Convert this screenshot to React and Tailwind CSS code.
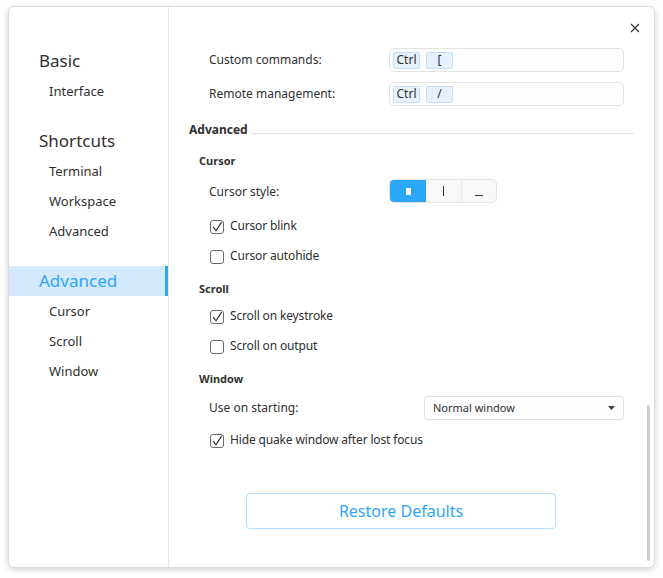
import React from "react";

const font = { fontFamily: '"Noto Sans", "Open Sans", sans-serif' };

function Check({ checked, label }) {
  return (
    <div className="flex items-center h-[30px] pl-[41px]">
      <div className="w-[14px] h-[14px] rounded-[3px] border border-[#6a6a6a] bg-white flex items-center justify-center mt-[1px]">
        {checked && (
          <svg width="12" height="12" viewBox="0 0 12 12">
            <path d="M2.2 6.2 L5 9.8 L10.6 1.2" fill="none" stroke="#303030" strokeWidth="1.2" />
          </svg>
        )}
      </div>
      <span className="ml-[6px] text-[12px] tracking-[-0.15px] text-[#303030]">{label}</span>
    </div>
  );
}

function Chip({ children }) {
  return (
    <div className="h-[17px] w-[27px] rounded-[2px] bg-[#e5f1fd] border border-[#c9def6] flex items-center justify-center text-[12px] text-[#303030] mr-[6px]">
      {children}
    </div>
  );
}

function ShortcutRow({ label, k, mt }) {
  return (
    <div className={`flex items-center h-[30px] ${mt}`}>
      <div className="w-[220px] pl-[40px] text-[12px] text-[#303030]">{label}</div>
      <div className="w-[235px] h-[24px] rounded-[5px] border border-[#e3e3e3] bg-[#fdfdfd] flex items-center pl-[3px]">
        <Chip>Ctrl</Chip>
        <Chip>{k}</Chip>
      </div>
    </div>
  );
}

function Side({ children, sub, selected, mt = "" }) {
  if (selected) {
    return (
      <div className={`h-[30px] flex items-center pl-[30px] bg-[#d4e9fb] border-r-[3px] border-[#2ca7f8] text-[17px] text-[#2ca7f8] ${mt}`}>
        {children}
      </div>
    );
  }
  return (
    <div className={`h-[30px] flex items-center ${sub ? "pl-[40px] pt-[2px] text-[13px]" : "pl-[30px] text-[17px]"} text-[#303030] ${mt}`}>
      {children}
    </div>
  );
}

export default function App() {
  return (
    <div className="w-[663px] h-[578px] bg-white pt-[6px] pl-[8px]" style={font}>
      <div className="relative w-[647px] h-[562px] rounded-[6px] bg-white border border-[#dcdcdc] shadow-[0_2px_6px_rgba(0,0,0,0.18)] flex overflow-hidden">
        {/* sidebar */}
        <div className="w-[160px] border-r border-[#e6e6e6] pt-[39px] flex flex-col">
          <Side>Basic</Side>
          <Side sub>Interface</Side>
          <Side mt="mt-[20px]">Shortcuts</Side>
          <Side sub>Terminal</Side>
          <Side sub>Workspace</Side>
          <Side sub>Advanced</Side>
          <Side selected mt="mt-[20px]">Advanced</Side>
          <Side sub>Cursor</Side>
          <Side sub>Scroll</Side>
          <Side sub>Window</Side>
        </div>

        {/* content */}
        <div className="flex-1 flex flex-col pt-[38px]">
          <ShortcutRow label="Custom commands:" k="[" mt="" />
          <ShortcutRow label="Remote management:" k="/" mt="mt-[4px]" />

          <div className="h-[20px] mt-[11px] flex items-center pl-[20px] pr-[20px]">
            <span className="text-[12px] font-bold text-[#303030]">Advanced</span>
            <div className="flex-1 h-px bg-[#e3e3e3] ml-[3px] mt-[6px]" />
          </div>

          <div className="h-[20px] mt-[11px] flex items-center pl-[30px] text-[11px] font-bold text-[#303030]">Cursor</div>

          <div className="flex items-center h-[30px] mt-[5px]">
            <div className="w-[220px] pl-[40px] pt-[2px] text-[12px] text-[#303030]">Cursor style:</div>
            <div className="flex h-[24px] w-[108px] rounded-[5px] border border-[#e3e3e3] overflow-hidden bg-[#f9f9f9]">
              <div className="w-[36px] bg-[#2ca7f8] flex items-center justify-center">
                <div className="w-[5px] h-[7px] bg-white" />
              </div>
              <div className="w-[36px] border-r border-[#e8e8e8] flex items-center justify-center">
                <div className="w-[1px] h-[10px] bg-[#303030]" />
              </div>
              <div className="flex-1 flex items-end justify-center pb-[6px]">
                <div className="w-[8px] h-[1px] bg-[#303030]" />
              </div>
            </div>
          </div>

          <div className="mt-[5px]">
            <Check checked label="Cursor blink" />
            <Check label="Cursor autohide" />
          </div>

          <div className="h-[20px] mt-[8px] flex items-center pl-[30px] text-[11px] font-bold text-[#303030]">Scroll</div>
          <div className="mt-[2px]">
            <Check checked label="Scroll on keystroke" />
            <Check label="Scroll on output" />
          </div>

          <div className="h-[20px] mt-[8px] flex items-center pl-[30px] text-[11px] font-bold text-[#303030]">Window</div>

          <div className="flex items-center h-[30px] mt-[4px]">
            <div className="w-[255px] pl-[40px] text-[12px] text-[#303030]">Use on starting:</div>
            <div className="w-[200px] h-[24px] rounded-[4px] border border-[#e0e0e0] bg-[#fdfdfd] flex items-center justify-between pl-[8px] pr-[8px]">
              <span className="text-[11px] text-[#303030]">Normal window</span>
              <svg width="7" height="4" viewBox="0 0 7 4">
                <path d="M0 0 L7 0 L3.5 4 Z" fill="#404040" />
              </svg>
            </div>
          </div>

          <div className="mt-[2px]">
            <Check checked label="Hide quake window after lost focus" />
          </div>

          <div className="mt-[38px] flex pl-[77px]">
            <div className="w-[310px] h-[36px] rounded-[4px] border border-[#b8dcf8] bg-white flex items-center justify-center text-[16px] text-[#2ca7f8]">
              Restore Defaults
            </div>
          </div>
        </div>

        {/* close */}
        <div className="absolute top-[14px] right-[12px] w-[14px] h-[14px] flex items-center justify-center">
          <svg width="10" height="10" viewBox="0 0 10 10">
            <path d="M1 1 L9 9 M9 1 L1 9" stroke="#303030" strokeWidth="1.1" />
          </svg>
        </div>

        {/* scrollbar */}
        <div className="absolute right-[4px] top-[398px] w-[3px] h-[156px] rounded-full bg-[#cfcfcf]" />
      </div>
    </div>
  );
}
